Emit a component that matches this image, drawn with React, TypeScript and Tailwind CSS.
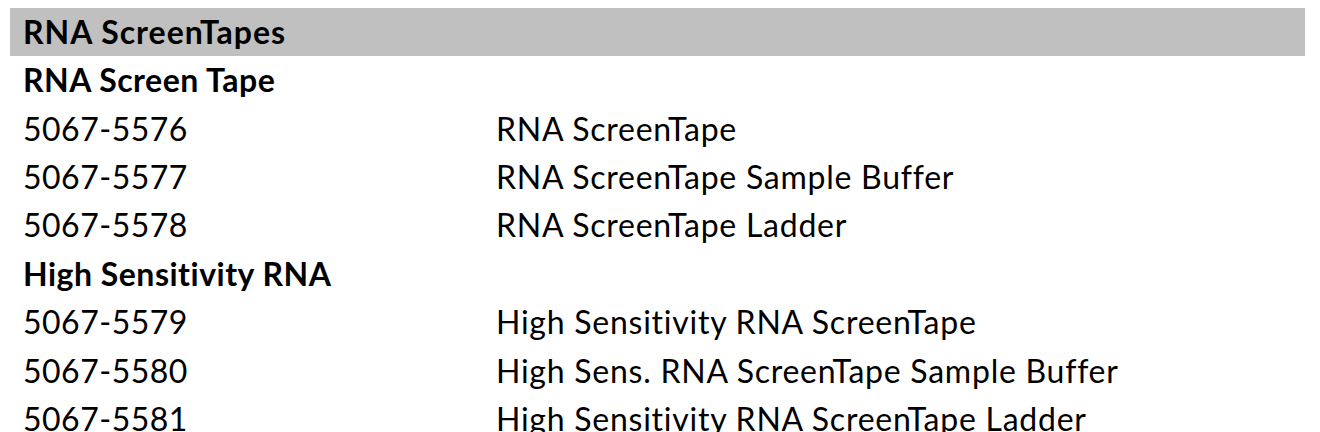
import React from "react";

const groups = [
  {
    title: "RNA Screen Tape",
    rows: [
      ["5067-5576", "RNA ScreenTape"],
      ["5067-5577", "RNA ScreenTape Sample Buffer"],
      ["5067-5578", "RNA ScreenTape Ladder"],
    ],
  },
  {
    title: "High Sensitivity RNA",
    rows: [
      ["5067-5579", "High Sensitivity RNA ScreenTape"],
      ["5067-5580", "High Sens. RNA ScreenTape Sample Buffer"],
      ["5067-5581", "High Sensitivity RNA ScreenTape Ladder"],
    ],
  },
];

export default function App() {
  return (
    <div
      className="w-[1320px] h-[432px] overflow-hidden bg-white text-black text-[32px] tracking-[0.5px]"
      style={{ fontFamily: "Lato, 'Noto Sans', sans-serif" }}
    >
      <div className="h-[8px] overflow-hidden">
        <div className="-mt-[37px] pl-[766px] leading-[40px] font-bold">g</div>
      </div>
      <div className="ml-[10px] w-[1295px] h-[48px] bg-[#c0c0c0] flex items-center pl-[13px] font-bold tracking-[1px]">
        RNA ScreenTapes
      </div>
      {groups.map((g) => (
        <div key={g.title}>
          <div className="h-[48.4px] flex items-center pl-[23px] font-bold">{g.title}</div>
          {g.rows.map(([num, desc]) => (
            <div key={num} className="h-[48.4px] flex items-center">
              <div className="w-[496px] pl-[23px]">{num}</div>
              <div className="tracking-[0.75px]">{desc}</div>
            </div>
          ))}
        </div>
      ))}
    </div>
  );
}
